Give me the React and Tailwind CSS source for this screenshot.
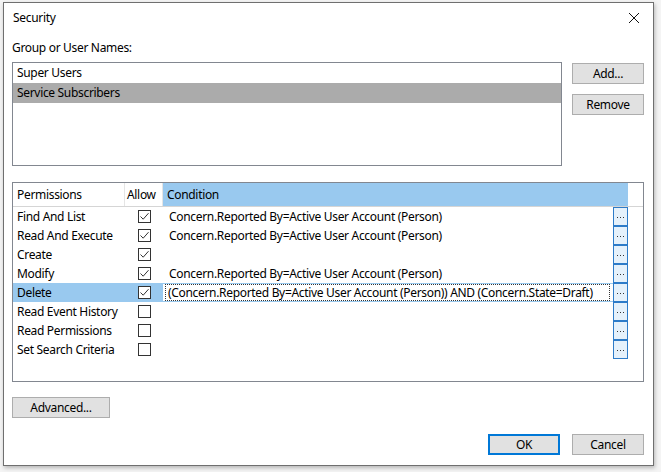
import React from "react";

const rows = [
  { name: "Find And List", allow: true, cond: "Concern.Reported By=Active User Account (Person)" },
  { name: "Read And Execute", allow: true, cond: "Concern.Reported By=Active User Account (Person)" },
  { name: "Create", allow: true, cond: "" },
  { name: "Modify", allow: true, cond: "Concern.Reported By=Active User Account (Person)" },
  { name: "Delete", allow: true, cond: "(Concern.Reported By=Active User Account (Person)) AND (Concern.State=Draft)", sel: true },
  { name: "Read Event History", allow: false, cond: "" },
  { name: "Read Permissions", allow: false, cond: "" },
  { name: "Set Search Criteria", allow: false, cond: "" },
];

function Check({ on }) {
  return (
    <div className="w-[13px] h-[13px] border border-[#333333] bg-white flex items-center justify-center">
      {on && (
        <svg width="11" height="11" viewBox="0 0 11 11">
          <path d="M1.5 5.5 L4.2 8.2 L9.5 2.2" fill="none" stroke="#333333" strokeWidth="1" />
        </svg>
      )}
    </div>
  );
}

function Btn({ children, className = "" }) {
  return (
    <div className={"h-[21px] bg-[#e1e1e1] border border-[#adadad] flex items-center justify-center text-black " + className}>
      {children}
    </div>
  );
}

export default function App() {
  return (
    <div className="w-[661px] h-[472px] bg-[#f4f4f4] overflow-hidden font-['Segoe_UI','Noto_Sans',sans-serif] text-[12px] tracking-[-0.32px] text-black leading-none whitespace-nowrap">
      <div className="ml-[3px] mt-[2px] w-[651px] h-[464px] bg-white border border-[#6f6f6f] shadow-[1px_2px_4px_rgba(0,0,0,0.25)] flex flex-col">
        {/* title bar */}
        <div className="h-[30px] flex items-center justify-between pl-[9px] pr-[13px] shrink-0">
          <span>Security</span>
          <svg width="12" height="12" viewBox="0 0 12 12">
            <path d="M1 1 L11 11 M11 1 L1 11" stroke="#111" strokeWidth="1" />
          </svg>
        </div>
        <div className="pl-[8px] pr-[9px] flex flex-col">
          <div className="mt-[7px] h-[16px] flex items-center">Group or User Names:</div>
          <div className="mt-[6px] flex gap-[10px]">
            <div className="w-[550px] h-[104px] border border-[#828790] flex flex-col">
              <div className="h-[20px] flex items-center pl-[4px]">Super Users</div>
              <div className="h-[20px] flex items-center pl-[4px] bg-[#ababab]">Service Subscribers</div>
            </div>
            <div className="flex flex-col gap-[10px] pt-[1px]">
              <Btn className="w-[72px]">Add...</Btn>
              <Btn className="w-[72px]">Remove</Btn>
            </div>
          </div>

          {/* permissions grid */}
          <div className="mt-[16px] w-[632px] h-[200px] border border-[#828790] flex flex-col">
            <div className="h-[24px] flex border-b border-[#d5d5d5] shrink-0">
              <div className="w-[112px] flex items-center pl-[4px] border-r border-[#e5e5e5]">Permissions</div>
              <div className="w-[38px] flex items-center pl-[2px] border-r border-[#e5e5e5]">Allow</div>
              <div className="w-[465px] flex items-center pl-[4px] bg-[#99c9ef]">Condition</div>
              <div className="flex-1" />
            </div>
            {rows.map((r) => (
              <div key={r.name} className="h-[19px] flex">
                <div className={"w-[112px] flex items-center pl-[4px] " + (r.sel ? "bg-[#99c9ef]" : "")}>{r.name}</div>
                <div className={"w-[38px] flex items-center justify-center " + (r.sel ? "bg-[#99c9ef]" : "")}>
                  <Check on={r.allow} />
                </div>
                <div className={"w-[450px] flex items-center " + (r.sel ? "border-y border-[#99c9ef]" : "")}>
                  {r.sel ? (
                    <div className="ml-[2px] w-[445px] h-[17px] border border-dotted border-[#333] flex items-center pl-[2px]">{r.cond}</div>
                  ) : (
                    <span className="pl-[6px]">{r.cond}</span>
                  )}
                </div>
                <div className="w-[15px] h-[19px] border border-[#2d7bc8] bg-[#e5f1fb] flex items-center justify-center pt-[2px]">
                  <svg width="7" height="2" viewBox="0 0 7 2">
                    <rect x="0" y="0" width="1" height="1" fill="#333" />
                    <rect x="3" y="0" width="1" height="1" fill="#333" />
                    <rect x="6" y="0" width="1" height="1" fill="#333" />
                  </svg>
                </div>
                <div className="flex-1" />
              </div>
            ))}
          </div>

          <Btn className="mt-[15px] w-[98px]">Advanced...</Btn>

          <div className="mt-[16px] flex justify-end gap-[12px]">
            <div className="w-[72px] h-[21px] bg-[#e1e1e1] border-2 border-[#0078d7] flex items-center justify-center">OK</div>
            <Btn className="w-[72px]">Cancel</Btn>
          </div>
        </div>
      </div>
    </div>
  );
}
